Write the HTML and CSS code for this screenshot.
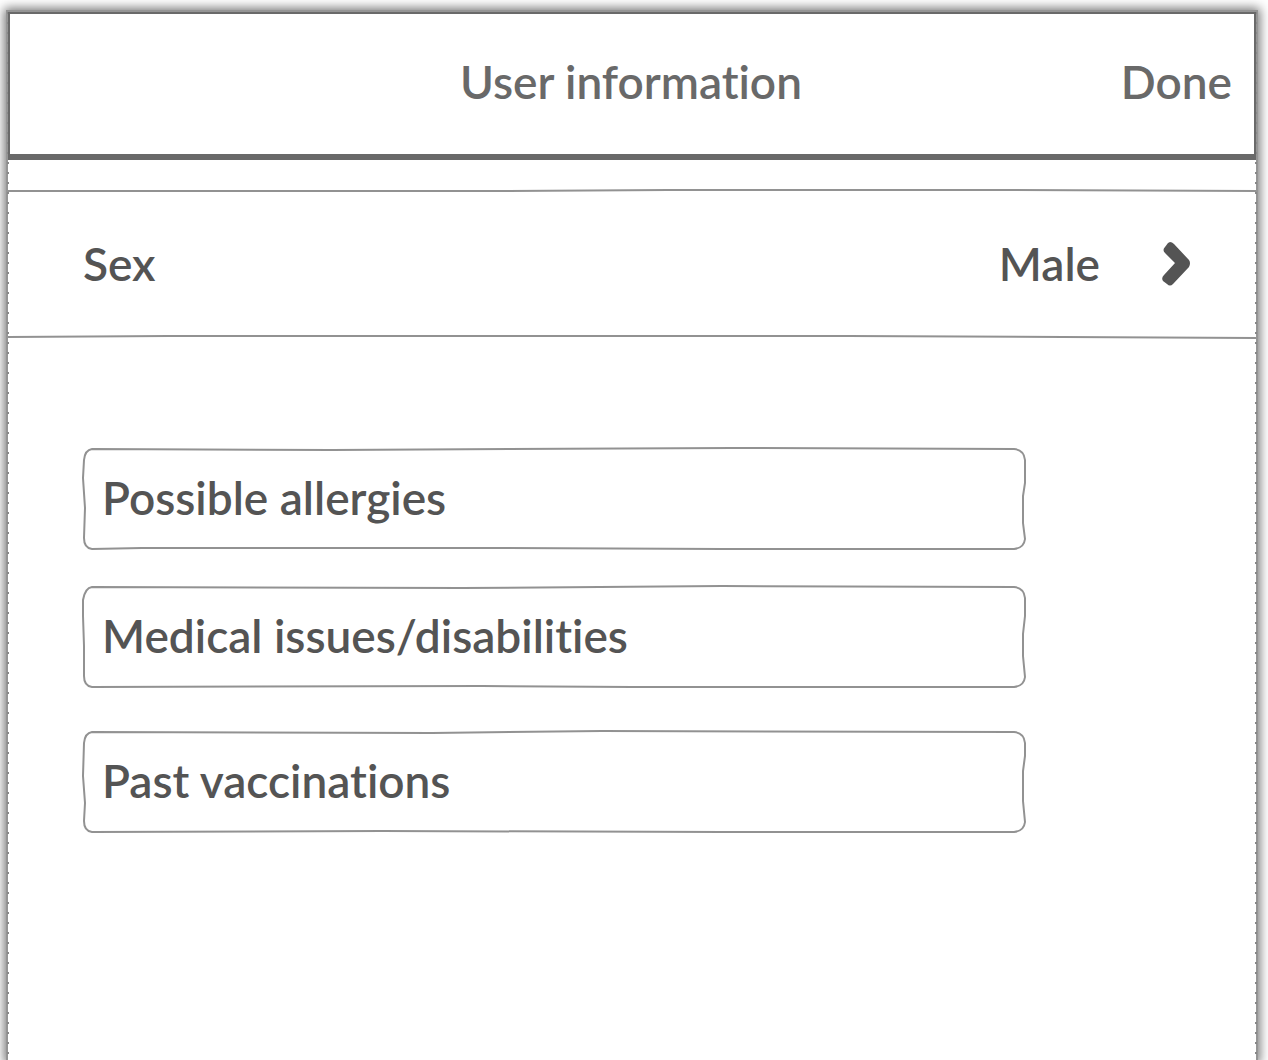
FILE: index.html
```html
<!DOCTYPE html>
<html lang="en">
<head>
<meta charset="utf-8">
<meta name="viewport" content="width=device-width, initial-scale=1">
<title>User information</title>
<link rel="stylesheet" href="styles.css">
</head>
<body>
<main class="screen">
  <header class="topbar">
    <h1 class="title">User information</h1>
    <button class="done" type="button">Done</button>
  </header>

  <button class="row" type="button">
    <svg class="sketch" viewBox="0 0 1248 148" preserveAspectRatio="none" aria-hidden="true">
      <path d="M0 1H500L660 0H1000L1248 1"/>
      <path d="M0 147L160 146H840L1248 148"/>
    </svg>
    <span class="row-label">Sex</span>
    <span class="row-value">Male</span>
    <svg class="chevron" viewBox="0 0 28 44" aria-hidden="true"><path d="M8 0Q10 0 12 2L27 18Q29 21 27 25L11 42Q8 45 5 42L1 39Q-1 36 2 33L13 21L3 11Q0 8 3 5L6 1Z"/></svg>
  </button>

  <form class="fields">
    <div class="field">
      <svg class="sketch" viewBox="0 0 944 102" preserveAspectRatio="none" aria-hidden="true"><path d="M10 1L250 2L650 0L932 1Q942 2 943 12V35L941 48V75L943 91Q942 100 932 101L640 101L420 100L60 100L10 101Q2 100 2 90L3 60L1 30L2 12Q3 2 10 1Z"/></svg>
      <input class="input" type="text" name="allergies" placeholder="Possible allergies" aria-label="Possible allergies">
    </div>
    <div class="field">
      <svg class="sketch" viewBox="0 0 944 102" preserveAspectRatio="none" aria-hidden="true"><path d="M10 1L380 2L640 0L932 1Q942 2 943 12V30L941 48V70L943 91Q942 100 932 101L550 101L400 100L10 101Q2 100 2 90L2 60L1 30V14Q3 2 10 1Z"/></svg>
      <input class="input" type="text" name="medical" placeholder="Medical issues/disabilities" aria-label="Medical issues/disabilities">
    </div>
    <div class="field field-history">
      <svg class="sketch" viewBox="0 0 944 102" preserveAspectRatio="none" aria-hidden="true"><path d="M10 1L350 2L520 0L932 1Q942 2 943 12V25L941 40V70L943 91Q942 100 932 101L640 101L300 100L10 101Q2 100 2 90L3 72L1 45L2 12Q3 2 10 1Z"/></svg>
      <input class="input" type="text" name="vaccinations" placeholder="Past vaccinations" aria-label="Past vaccinations">
    </div>
  </form>
</main>
</body>
</html>
```

FILE: styles.css
```css
* {
  box-sizing: border-box;
}

body {
  display: flex;
  min-height: 100vh;
  margin: 0;
  padding: 12px 12px 0 8px;
  overflow-x: hidden;
  background: #fff;
  color: #545454;
  font-family: Lato, "Liberation Sans", sans-serif;
  font-size: 46px;
  font-weight: 600;
  font-variant-ligatures: none;
  line-height: 56px;
}

button,
input {
  margin: 0;
  border: 0;
  background: none;
  color: inherit;
  font: inherit;
  font-variant-ligatures: inherit;
}

button {
  cursor: pointer;
}

.screen {
  position: relative;
  flex: 1;
  min-width: 0;
  background: #fff;
  box-shadow: 0 0 0 2px #959595, 0 0 10px 4px #777;
}

/* Stitched edge down both sides */
.screen::before {
  content: "";
  position: absolute;
  inset: 0 -1px;
  background:
    repeating-linear-gradient(#888 0 2px, transparent 2px 10px) left / 2px 100% no-repeat,
    repeating-linear-gradient(#888 0 2px, transparent 2px 10px) right / 2px 100% no-repeat;
  pointer-events: none;
}

.topbar {
  position: relative;
  display: grid;
  grid-template-columns: 1fr auto 1fr;
  align-items: center;
  height: 148px;
  padding: 0 22px 4px 20px;
  border: 2px solid #696969;
  border-bottom-width: 6px;
  background: #fff;
  color: #696969;
}

.title {
  grid-column: 2;
  margin: 0;
  font: inherit;
  font-variant-ligatures: inherit;
}

.done {
  justify-self: end;
  padding: 0;
}

.row {
  position: relative;
  display: flex;
  align-items: center;
  width: 100%;
  height: 148px;
  margin-top: 30px;
  padding: 0 66px 0 75px;
}

.row-value {
  margin-left: auto;
}

.chevron {
  width: 28px;
  height: 44px;
  margin-left: 62px;
  fill: #545454;
}

.fields {
  display: flex;
  flex-direction: column;
  gap: 36px;
  padding: 110px 230px 40px 74px;
}

.field {
  position: relative;
  height: 102px;
}

.field-history {
  margin-top: 7px;
}

.input {
  display: block;
  width: 100%;
  height: 100%;
  padding: 0 20px 4px;
}

.input::placeholder {
  color: #545454;
  opacity: 1;
}

/* Hand-drawn outlines stretch with the box they surround */
.sketch {
  position: absolute;
  inset: 0;
  width: 100%;
  height: 100%;
  overflow: visible;
  fill: none;
  stroke: #929292;
  stroke-width: 2px;
  pointer-events: none;
}

.sketch path {
  vector-effect: non-scaling-stroke;
}
```
